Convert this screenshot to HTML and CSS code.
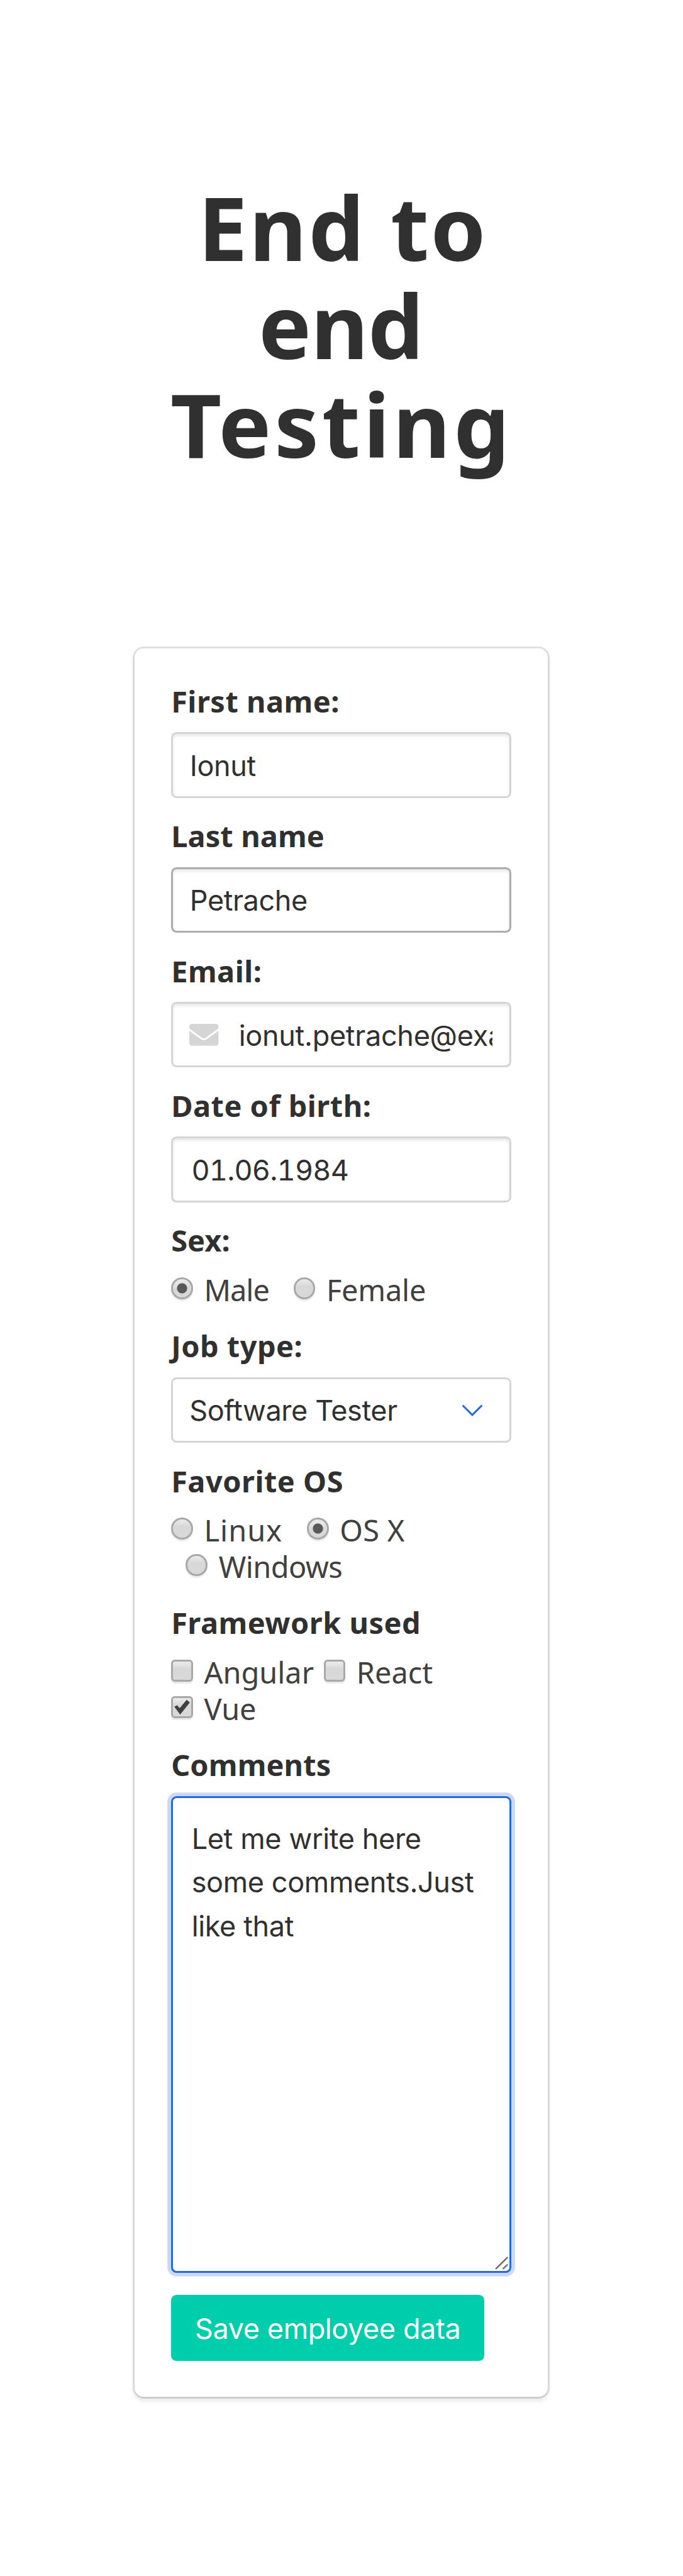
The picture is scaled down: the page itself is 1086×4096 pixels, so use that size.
FILE: index.html
```html
<!DOCTYPE html>
<html lang="en">
<head>
<meta charset="utf-8">
<title>End to end Testing</title>
<link rel="stylesheet" href="styles.css">
</head>
<body>
<main class="page">
  <h1 class="title">
    <span class="title-line title-first">End to</span>
    <span class="title-line title-second">end</span>
    <span class="title-line title-third">Testing</span>
  </h1>
  <form class="box">
    <div class="field">
      <label class="label" for="first">First name:</label>
      <input class="input" id="first" type="text" value="Ionut">
    </div>
    <div class="field">
      <label class="label snug" for="last">Last name</label>
      <input class="input is-hovered" id="last" type="text" value="Petrache">
    </div>
    <div class="field">
      <label class="label" for="email">Email:</label>
      <div class="control">
        <input class="input has-icon" id="email" type="text" value="ionut.petrache@example.com">
        <svg class="envelope" viewBox="0 0 512 384"><path d="M502.300 126.800c3.900-3.100 9.700-.2 9.700 4.700V336c0 26.500-21.500 48-48 48H48c-26.500 0-48-21.500-48-48V131.600c0-5 5.700-7.800 9.700-4.700 22.400 17.400 52.100 39.500 154.100 113.600 21.100 15.400 56.700 47.800 92.200 47.600 35.700.3 72-32.800 92.300-47.600 102-74.100 131.600-96.300 154-113.700zM256 256c23.200.4 56.600-29.200 73.400-41.400 132.700-96.300 142.800-104.700 173.400-128.700 5.800-4.500 9.200-11.500 9.200-18.900V48c0-26.500-21.500-48-48-48H48C21.500 0 0 21.500 0 48v19c0 7.400 3.400 14.300 9.200 18.900 30.600 23.900 40.700 32.400 173.400 128.700 16.800 12.200 50.200 41.800 73.400 41.400z"/></svg>
      </div>
    </div>
    <div class="field">
      <label class="label" for="birth">Date of birth:</label>
      <input class="input date" id="birth" type="text" value="01.06.1984">
    </div>
    <div class="field">
      <div class="label snug">Sex:</div>
      <div class="options">
        <label class="option male"><input class="radio" type="radio" name="sex" checked><span>Male</span></label>
        <label class="option spaced female"><input class="radio" type="radio" name="sex"><span>Female</span></label>
      </div>
    </div>
    <div class="field">
      <label class="label" for="job">Job type:</label>
      <div class="control">
        <select class="input select" id="job"><option>Software Tester</option></select>
        <svg class="arrow" viewBox="0 0 33 19"><path d="M1.500 1.500l15 15 15-15"/></svg>
      </div>
    </div>
    <div class="field">
      <div class="label">Favorite OS</div>
      <div class="options">
        <label class="option linux"><input class="radio" type="radio" name="os"><span>Linux</span></label>
        <label class="option spaced osx"><input class="radio" type="radio" name="os" checked><span>OS X</span></label>
        <label class="option spaced windows"><input class="radio" type="radio" name="os"><span>Windows</span></label>
      </div>
    </div>
    <div class="field">
      <div class="label">Framework used</div>
      <div class="options">
        <label class="option"><input class="checkbox" type="checkbox"><span>Angular</span></label>
        <label class="option"><input class="checkbox" type="checkbox"><span>React</span></label>
        <label class="option"><span class="tick-box"><input class="checkbox" type="checkbox" checked><svg class="tick" viewBox="0 0 36 36"><path d="M5.300 17.300L10 15l4.300 4.700L25.700 6 31 10.300 15 30.300z"/></svg></span><span>Vue</span></label>
      </div>
    </div>
    <div class="field">
      <label class="label snug" for="comments">Comments</label>
      <div class="control">
        <textarea class="textarea" id="comments" spellcheck="false">Let me write here some comments.Just like that</textarea>
        <svg class="grip" viewBox="0 0 22 22"><path class="grip-light" d="M2.500 21.500l19-19M14.500 21.500l7-7"/><path class="grip-dark" d="M1 20.500L21 1M13 20.500l8-7.600"/></svg>
      </div>
    </div>
    <button class="button" type="button">Save employee data</button>
  </form>
</main>
</body>
</html>
```
FILE: styles.css
```css
html {
  font-size: 46.344px;
  background: #fff;
}

*,
*::before,
*::after {
  box-sizing: border-box;
}

body {
  margin: 0;
  color: #404040;
  font-family: "Noto Sans", "Open Sans", sans-serif;
}

.page {
  display: flex;
  flex-direction: column;
  align-items: center;
  height: 4096px;
  overflow: hidden;
}

/* Heading */
.title {
  margin: 282px 0 280px;
  color: #303030;
  font-size: 140.8px;
  font-weight: 700;
  line-height: 156.4px;
  text-align: center;
}

.title-line {
  display: block;
}

.title-first {
  padding-left: 4px;
  letter-spacing: 2.54px;
}

.title-second {
  padding-right: 2px;
  letter-spacing: -0.85px;
}

.title-third {
  letter-spacing: 4.89px;
}

/* Card */
.box {
  width: 656.8px;
  margin-right: 0.8px;
  padding: 1.25rem;
  border-radius: 14.5px;
  background: #fff;
  box-shadow: 0 5.8px 8.7px rgba(10, 10, 10, 0.1), 0 0 0 2.9px rgba(10, 10, 10, 0.12);
}

.field {
  margin-bottom: 0.75rem;
}

.control {
  position: relative;
}

.label {
  display: block;
  margin-bottom: 22.2px;
  color: #303030;
  font-size: 46.9px;
  font-weight: 700;
  letter-spacing: 0.5px;
  line-height: 53.1px;
  white-space: nowrap;
}

.snug {
  letter-spacing: 0.13px;
}

/* Text controls */
.input,
.textarea {
  display: block;
  width: 100%;
  margin: 0;
  border: 3px solid #d5d5d5;
  border-radius: 8.7px;
  outline: 0;
  background: #fff;
  color: #303030;
  font-family: Inter, Roboto, sans-serif;
  font-size: 45px;
  letter-spacing: -0.4px;
}

.input {
  height: 2.25rem;
  padding: 2px 26.7px 0;
  box-shadow: inset 0 2.9px 5.8px rgba(10, 10, 10, 0.1);
}

.is-hovered {
  border-color: #acacac;
}

.has-icon {
  padding-left: 104.5px;
  letter-spacing: -0.29px;
}

.date {
  padding-left: 29.3px;
  font-variant-numeric: tabular-nums;
  letter-spacing: -0.8px;
}

.envelope {
  position: absolute;
  top: 34.8px;
  left: 29px;
  width: 46.4px;
  height: 34.8px;
  fill: #d5d5d5;
}

.select {
  padding-left: 26.1px;
  box-shadow: none;
  appearance: none;
}

.arrow {
  position: absolute;
  top: 44.6px;
  right: 46.5px;
  width: 31.9px;
  height: 18.3px;
  fill: none;
  stroke: #2768db;
  stroke-width: 3;
  stroke-linecap: square;
}

.textarea {
  height: 16.375rem;
  padding: 30px 29.5px;
  border-color: #2768db;
  box-shadow: 0 0 0 5.8px #c9d9f6;
  letter-spacing: -0.36px;
  line-height: 1.5rem;
  overflow: hidden;
  resize: none;
}

.grip {
  position: absolute;
  right: 4.5px;
  bottom: 5px;
  width: 21.2px;
  height: 21.2px;
  fill: none;
  stroke-width: 2;
}

.grip-dark {
  stroke: #606060;
}

.grip-light {
  stroke: #dcdcdc;
}

/* Radio buttons and checkboxes */
.options {
  display: flex;
  flex-wrap: wrap;
  column-gap: 15.5px;
}

.option {
  display: flex;
  align-items: flex-start;
  gap: 17.6px;
  height: 1.25rem;
  font-size: 46.9px;
  line-height: 58.2px;
  white-space: nowrap;
}

.spaced {
  margin-left: 23.3px;
}

.male {
  letter-spacing: -1px;
}

.female {
  letter-spacing: -0.22px;
}

.linux {
  letter-spacing: 1.03px;
}

.osx {
  letter-spacing: 0.34px;
}

.windows {
  letter-spacing: -0.55px;
}

.radio,
.checkbox {
  display: block;
  flex: none;
  width: 0.75rem;
  height: 0.75rem;
  margin: 9.4px 0 0;
  border: 3px solid #a8a8a8;
  border-radius: 50%;
  background: linear-gradient(#ebebeb, #d8d8d8 40%, #d8d8d8);
  box-shadow: 0 2.9px 0 #ebebeb;
  appearance: none;
}

.radio:checked {
  background: radial-gradient(circle, #595959 7.7px, transparent 8.5px), linear-gradient(#ebebeb, #d8d8d8 60%, #d8d8d8);
}

.checkbox {
  border-radius: 6px;
}

.tick-box {
  position: relative;
}

.tick {
  position: absolute;
  top: 9.4px;
  left: 0;
  width: 0.75rem;
  height: 0.75rem;
  fill: #404040;
}

/* Submit */
.button {
  display: block;
  width: 498.2px;
  height: 2.25rem;
  padding: 2px 0 0;
  border: 0;
  border-radius: 8.7px;
  background: #00cdab;
  color: #fff;
  font-family: Inter, Roboto, sans-serif;
  font-size: 45px;
  letter-spacing: -0.4px;
}
```
